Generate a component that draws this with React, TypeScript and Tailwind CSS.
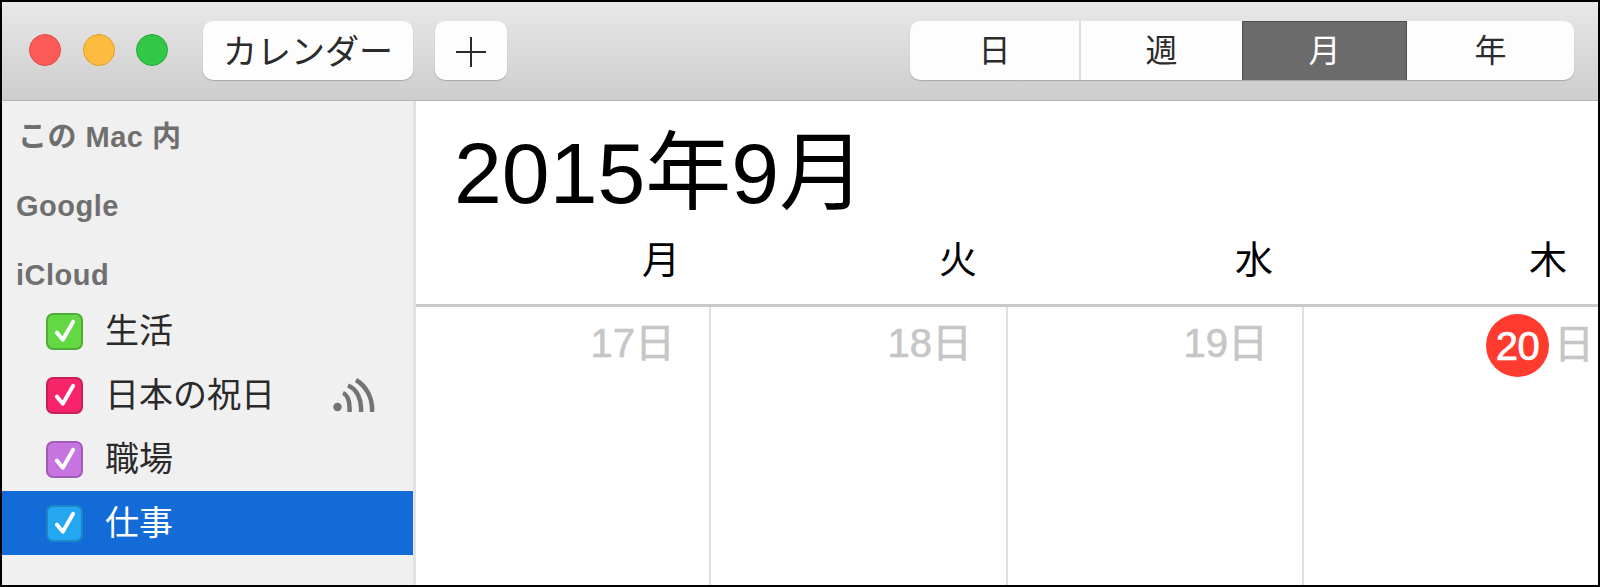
const fontStack = "font-['Liberation_Sans','Noto_Sans_CJK_JP',sans-serif]";

const calendars = [
  { name: '生活', box: 'bg-[#62d845] border-[#4cae36]' },
  { name: '日本の祝日', box: 'bg-[#f7246a] border-[#c81f58]', feed: true },
  { name: '職場', box: 'bg-[#c675e0] border-[#a25cb8]' },
  { name: '仕事', box: 'bg-[#22a7f0] border-[#1d86c8]', selected: true },
];

const days = [
  { label: '月', date: '17', w: 'w-[295px]' },
  { label: '火', date: '18', w: 'w-[297px]' },
  { label: '水', date: '19', w: 'w-[296px]' },
  { label: '木', date: '20', w: 'w-[294px]', today: true },
];

const views = [
  { label: '日', w: 'w-[171px]' },
  { label: '週', w: 'w-[161px]' },
  { label: '月', w: 'w-[165px]', active: true },
  { label: '年', w: 'w-[167px]' },
];

function CheckBox({ className }: { className: string }) {
  return (
    <span className={`flex h-[37px] w-[37px] items-center justify-center rounded-[7px] border-2 ${className}`}>
      <svg viewBox="0 0 24 24" className="h-[26px] w-[26px]" fill="none" stroke="white" strokeWidth="3.6" strokeLinecap="round" strokeLinejoin="round">
        <path d="M4.5 13.5 L10 20 L19.5 3.5" />
      </svg>
    </span>
  );
}

function FeedIcon() {
  return (
    <svg viewBox="0 0 42 34" className="h-[34px] w-[42px]" fill="none" stroke="#737373" strokeWidth="4.5">
      <circle cx="4.5" cy="29" r="4.2" fill="#737373" stroke="none" />
      <path d="M10 15 C15 17 17 25 16.5 34" />
      <path d="M15 7.5 C24 11 29 22 28 34" />
      <path d="M23 2 C33 8 40 20 39 34" />
    </svg>
  );
}

function SectionLabel({ children, className }: { children: React.ReactNode; className: string }) {
  return (
    <div className={`pl-[14px] text-[29px] font-bold leading-[32px] tracking-[0.5px] text-[#6f6f6f] ${className}`}>
      {children}
    </div>
  );
}

export default function App() {
  return (
    <div className={`flex h-[587px] w-[1600px] flex-col overflow-hidden border-2 border-black bg-white ${fontStack}`}>
      <header className="flex h-[99px] shrink-0 items-start border-b border-[#b4b4b4] bg-gradient-to-b from-[#e8e8e8] to-[#cdcdcd] pt-[19px]">
        <div className="mt-[13px] ml-[27px] flex gap-[21.5px]">
          <span className="h-[32px] w-[32px] rounded-full border border-[#e5483f] bg-[#fc5b57]" />
          <span className="h-[32px] w-[32px] rounded-full border border-[#dfa023] bg-[#fdbb40]" />
          <span className="h-[32px] w-[32px] rounded-full border border-[#2aa83a] bg-[#33c748]" />
        </div>
        <button type="button" className="ml-[35px] h-[59px] w-[210px] rounded-[10px] bg-[#fdfdfd] pt-[3px] text-[34px] text-[#2b2b2b] shadow-[0_1px_1px_rgba(0,0,0,0.2)]">
          カレンダー
        </button>
        <button type="button" className="ml-[22px] flex h-[59px] w-[72px] items-center justify-center rounded-[10px] bg-[#fdfdfd] pt-[2px] shadow-[0_1px_1px_rgba(0,0,0,0.2)]">
          <svg viewBox="0 0 30 30" className="h-[30px] w-[30px]" stroke="#2b2b2b" strokeWidth="2">
            <path d="M0 15 H30 M15 0 V30" />
          </svg>
        </button>
        <div className="ml-auto mr-[24px] flex h-[59px] overflow-hidden rounded-[10px] bg-[#fdfdfd] shadow-[0_1px_1px_rgba(0,0,0,0.2)]">
          {views.map((v, i) => (
            <div
              key={v.label}
              className={`flex items-center justify-center text-[32px] ${v.w} ${
                v.active ? 'border-x border-t border-[#4f4f4f] bg-[#6b6b6b] text-white' : 'text-[#2b2b2b]'
              } ${i === 0 ? 'border-r-2 border-[#dedede]' : ''}`}
            >
              {v.label}
            </div>
          ))}
        </div>
      </header>

      <div className="flex min-h-0 flex-1">
        <aside className="w-[414px] shrink-0 border-r-[3px] border-[#e2e2e2] bg-[#f0f0f0] pt-[20px]">
          <SectionLabel className="pl-[16px]">この Mac 内</SectionLabel>
          <SectionLabel className="mt-[37px]">Google</SectionLabel>
          <SectionLabel className="mt-[37px]">iCloud</SectionLabel>
          <ul className="mt-[8px]">
            {calendars.map((c) => (
              <li
                key={c.name}
                className={`flex h-[64px] items-center pl-[44px] pr-[38px] text-[34px] ${
                  c.selected ? 'bg-[#126bd6] text-white' : 'text-[#2a2a2a]'
                }`}
              >
                <CheckBox className={c.box} />
                <span className="ml-[22px] flex-1 pt-[1px]">{c.name}</span>
                {c.feed ? <FeedIcon /> : null}
              </li>
            ))}
          </ul>
        </aside>

        <main className="flex min-w-0 flex-1 flex-col text-black">
          <h1 className="h-[128px] shrink-0 pl-[38px] pt-[24px] text-[86px] font-normal leading-[96px]">2015年9月</h1>
          <div className="flex h-[78px] shrink-0 border-b-[3px] border-[#c9c9c9]">
            {days.map((d) => (
              <div key={d.label} className={`${d.w} pt-[9px] pr-[31px] text-right text-[38px] leading-[44px]`}>
                {d.label}
              </div>
            ))}
          </div>
          <div className="flex flex-1">
            {days.map((d, i) => (
              <div
                key={d.date}
                className={`${d.w} flex items-start justify-end text-[40px] leading-[46px] text-[#c6c6c6] [-webkit-text-stroke:0.6px_#c6c6c6] ${
                  i < 3 ? 'border-r-2 border-[#dfdfdf]' : ''
                } ${d.today ? 'pr-[4px] pt-[7px]' : 'pr-[34px] pt-[13px]'}`}
              >
                {d.today ? (
                  <>
                    <span className="flex h-[63px] w-[63px] items-center justify-center rounded-full bg-[#ff3b30] tracking-[-0.5px] text-white [-webkit-text-stroke:0.7px_white]">
                      {d.date}
                    </span>
                    <span className="ml-[5px] mt-[7px]">日</span>
                  </>
                ) : (
                  <span>{d.date}日</span>
                )}
              </div>
            ))}
          </div>
        </main>
      </div>
    </div>
  );
}
